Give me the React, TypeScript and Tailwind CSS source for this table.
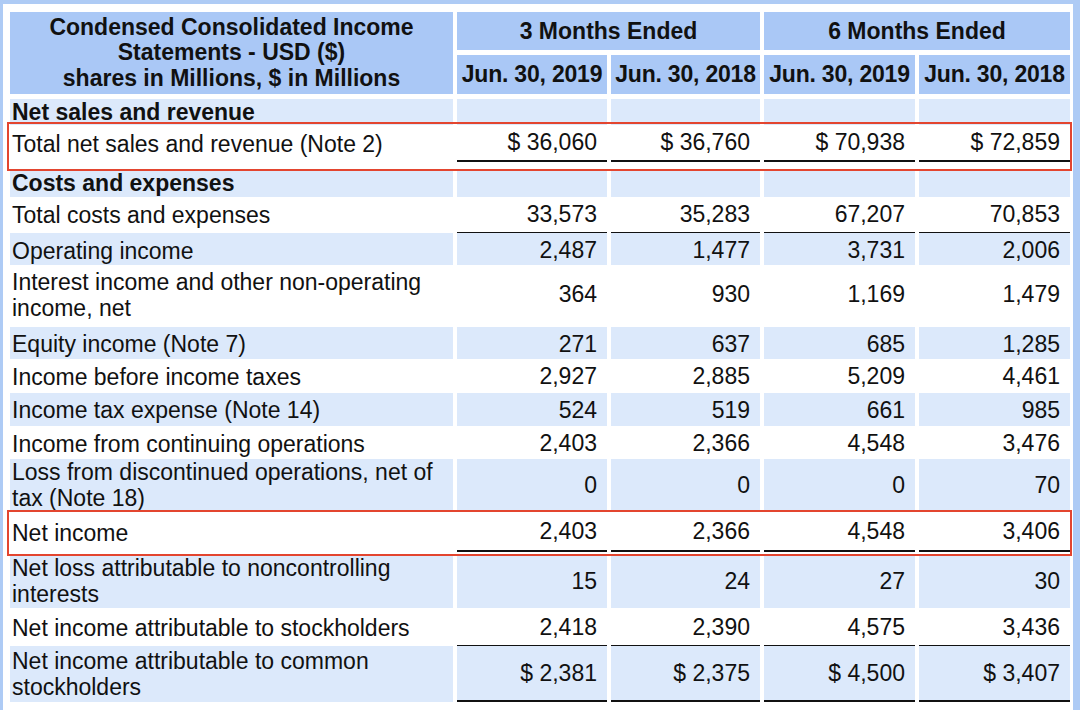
import React from "react";

type Row = {
  label: React.ReactNode;
  vals?: string[];
  bold?: boolean;
  blue?: boolean;
  line?: boolean;
  h: number;
  mt?: number;
  pb?: number;
};

const rows: Row[] = [
  { label: "Net sales and revenue", bold: true, blue: true, h: 24 },
  { label: "Total net sales and revenue (Note 2)", vals: ["$ 36,060", "$ 36,760", "$ 70,938", "$ 72,859"], line: true, h: 37 },
  { label: "Costs and expenses", bold: true, blue: true, h: 25, mt: 6, pb: 2 },
  { label: "Total costs and expenses", vals: ["33,573", "35,283", "67,207", "70,853"], line: true, h: 34 },
  { label: "Operating income", vals: ["2,487", "1,477", "3,731", "2,006"], blue: true, line: true, h: 30, pb: 3 },
  { label: <>Interest income and other non-operating<br />income, net</>, vals: ["364", "930", "1,169", "1,479"], h: 60, pb: 1 },
  { label: "Equity income (Note 7)", vals: ["271", "637", "685", "1,285"], blue: true, h: 30, pb: 3 },
  { label: "Income before income taxes", vals: ["2,927", "2,885", "5,209", "4,461"], line: true, h: 32, pb: 3 },
  { label: "Income tax expense (Note 14)", vals: ["524", "519", "661", "985"], blue: true, h: 31, pb: 2 },
  { label: "Income from continuing operations", vals: ["2,403", "2,366", "4,548", "3,476"], line: true, h: 31, pb: 2 },
  { label: <>Loss from discontinued operations, net of<br />tax (Note 18)</>, vals: ["0", "0", "0", "70"], blue: true, h: 52 },
  { label: "Net income", vals: ["2,403", "2,366", "4,548", "3,406"], line: true, h: 39 },
  { label: <>Net loss attributable to noncontrolling<br />interests</>, vals: ["15", "24", "27", "30"], blue: true, h: 54 },
  { label: "Net income attributable to stockholders", vals: ["2,418", "2,390", "4,575", "3,436"], line: true, h: 34 },
  { label: <>Net income attributable to common<br />stockholders</>, vals: ["$ 2,381", "$ 2,375", "$ 4,500", "$ 3,407"], blue: true, line: true, h: 56 },
];

const cols = "grid grid-cols-[443px_150px_149px_151px_151px] gap-x-[4px]";

export default function App() {
  return (
    <div
      className="w-[1080px] h-[710px] overflow-hidden bg-white text-[#111] text-[23px]"
      style={{ fontFamily: '"Liberation Sans", Arial, Helvetica, sans-serif' }}
    >
      <div className="h-[760px] border-l-[3px] border-t-[4px] border-r-[7px] border-[#aecbf5] bg-white pl-[7px] pt-[8px] pr-[3px]">
        <div className="relative">
          {/* Header */}
          <div className={`${cols} grid-rows-[38px_39px] gap-y-[5px] font-bold`}>
            <div className="row-span-2 bg-[#aac8f6] flex items-center justify-center text-center leading-[25.5px]">
              <div>
                Condensed Consolidated Income
                <br />
                Statements - USD ($)
                <br />
                shares in Millions, $ in Millions
              </div>
            </div>
            <div className="col-span-2 bg-[#aac8f6] flex items-center justify-center whitespace-nowrap">3 Months Ended</div>
            <div className="col-span-2 bg-[#aac8f6] flex items-center justify-center whitespace-nowrap">6 Months Ended</div>
            <div className="bg-[#aac8f6] flex items-center justify-center whitespace-nowrap tracking-[-0.2px]">Jun. 30, 2019</div>
            <div className="bg-[#aac8f6] flex items-center justify-center whitespace-nowrap tracking-[-0.2px]">Jun. 30, 2018</div>
            <div className="bg-[#aac8f6] flex items-center justify-center whitespace-nowrap tracking-[-0.2px]">Jun. 30, 2019</div>
            <div className="bg-[#aac8f6] flex items-center justify-center whitespace-nowrap tracking-[-0.2px]">Jun. 30, 2018</div>
          </div>

          {/* Body */}
          <div className="flex flex-col gap-[2px] mt-[5px]">
            {rows.map((r, i) => {
              const bg = r.blue ? "bg-[#dce9fb]" : "bg-white";
              return (
                <div key={i} className={cols} style={{ height: r.h, marginTop: r.mt ?? 0 }}>
                  <div
                    className={`${bg} flex items-center pl-[2px] leading-[26px] whitespace-nowrap ${r.bold ? "font-bold" : ""}`}
                    style={{ paddingBottom: r.pb ?? 0 }}
                  >
                    <div>{r.label}</div>
                  </div>
                  {[0, 1, 2, 3].map((c) => (
                    <div
                      key={c}
                      className={`${bg} flex items-center justify-end pr-[10px] whitespace-nowrap ${r.line ? "border-b-2 border-[#111]" : ""}`}
                      style={{ paddingBottom: r.pb ?? 0 }}
                    >
                      {r.vals ? r.vals[c] : ""}
                    </div>
                  ))}
                </div>
              );
            })}
          </div>

          {/* Red highlight boxes */}
          <div className="absolute left-[-3px] top-[110px] w-[1065px] h-[49px] border-[2.5px] border-[#e3452f] pointer-events-none" />
          <div className="absolute left-[-3px] top-[498px] w-[1065px] h-[46px] border-[2.5px] border-[#e3452f] pointer-events-none" />
        </div>
      </div>
    </div>
  );
}
